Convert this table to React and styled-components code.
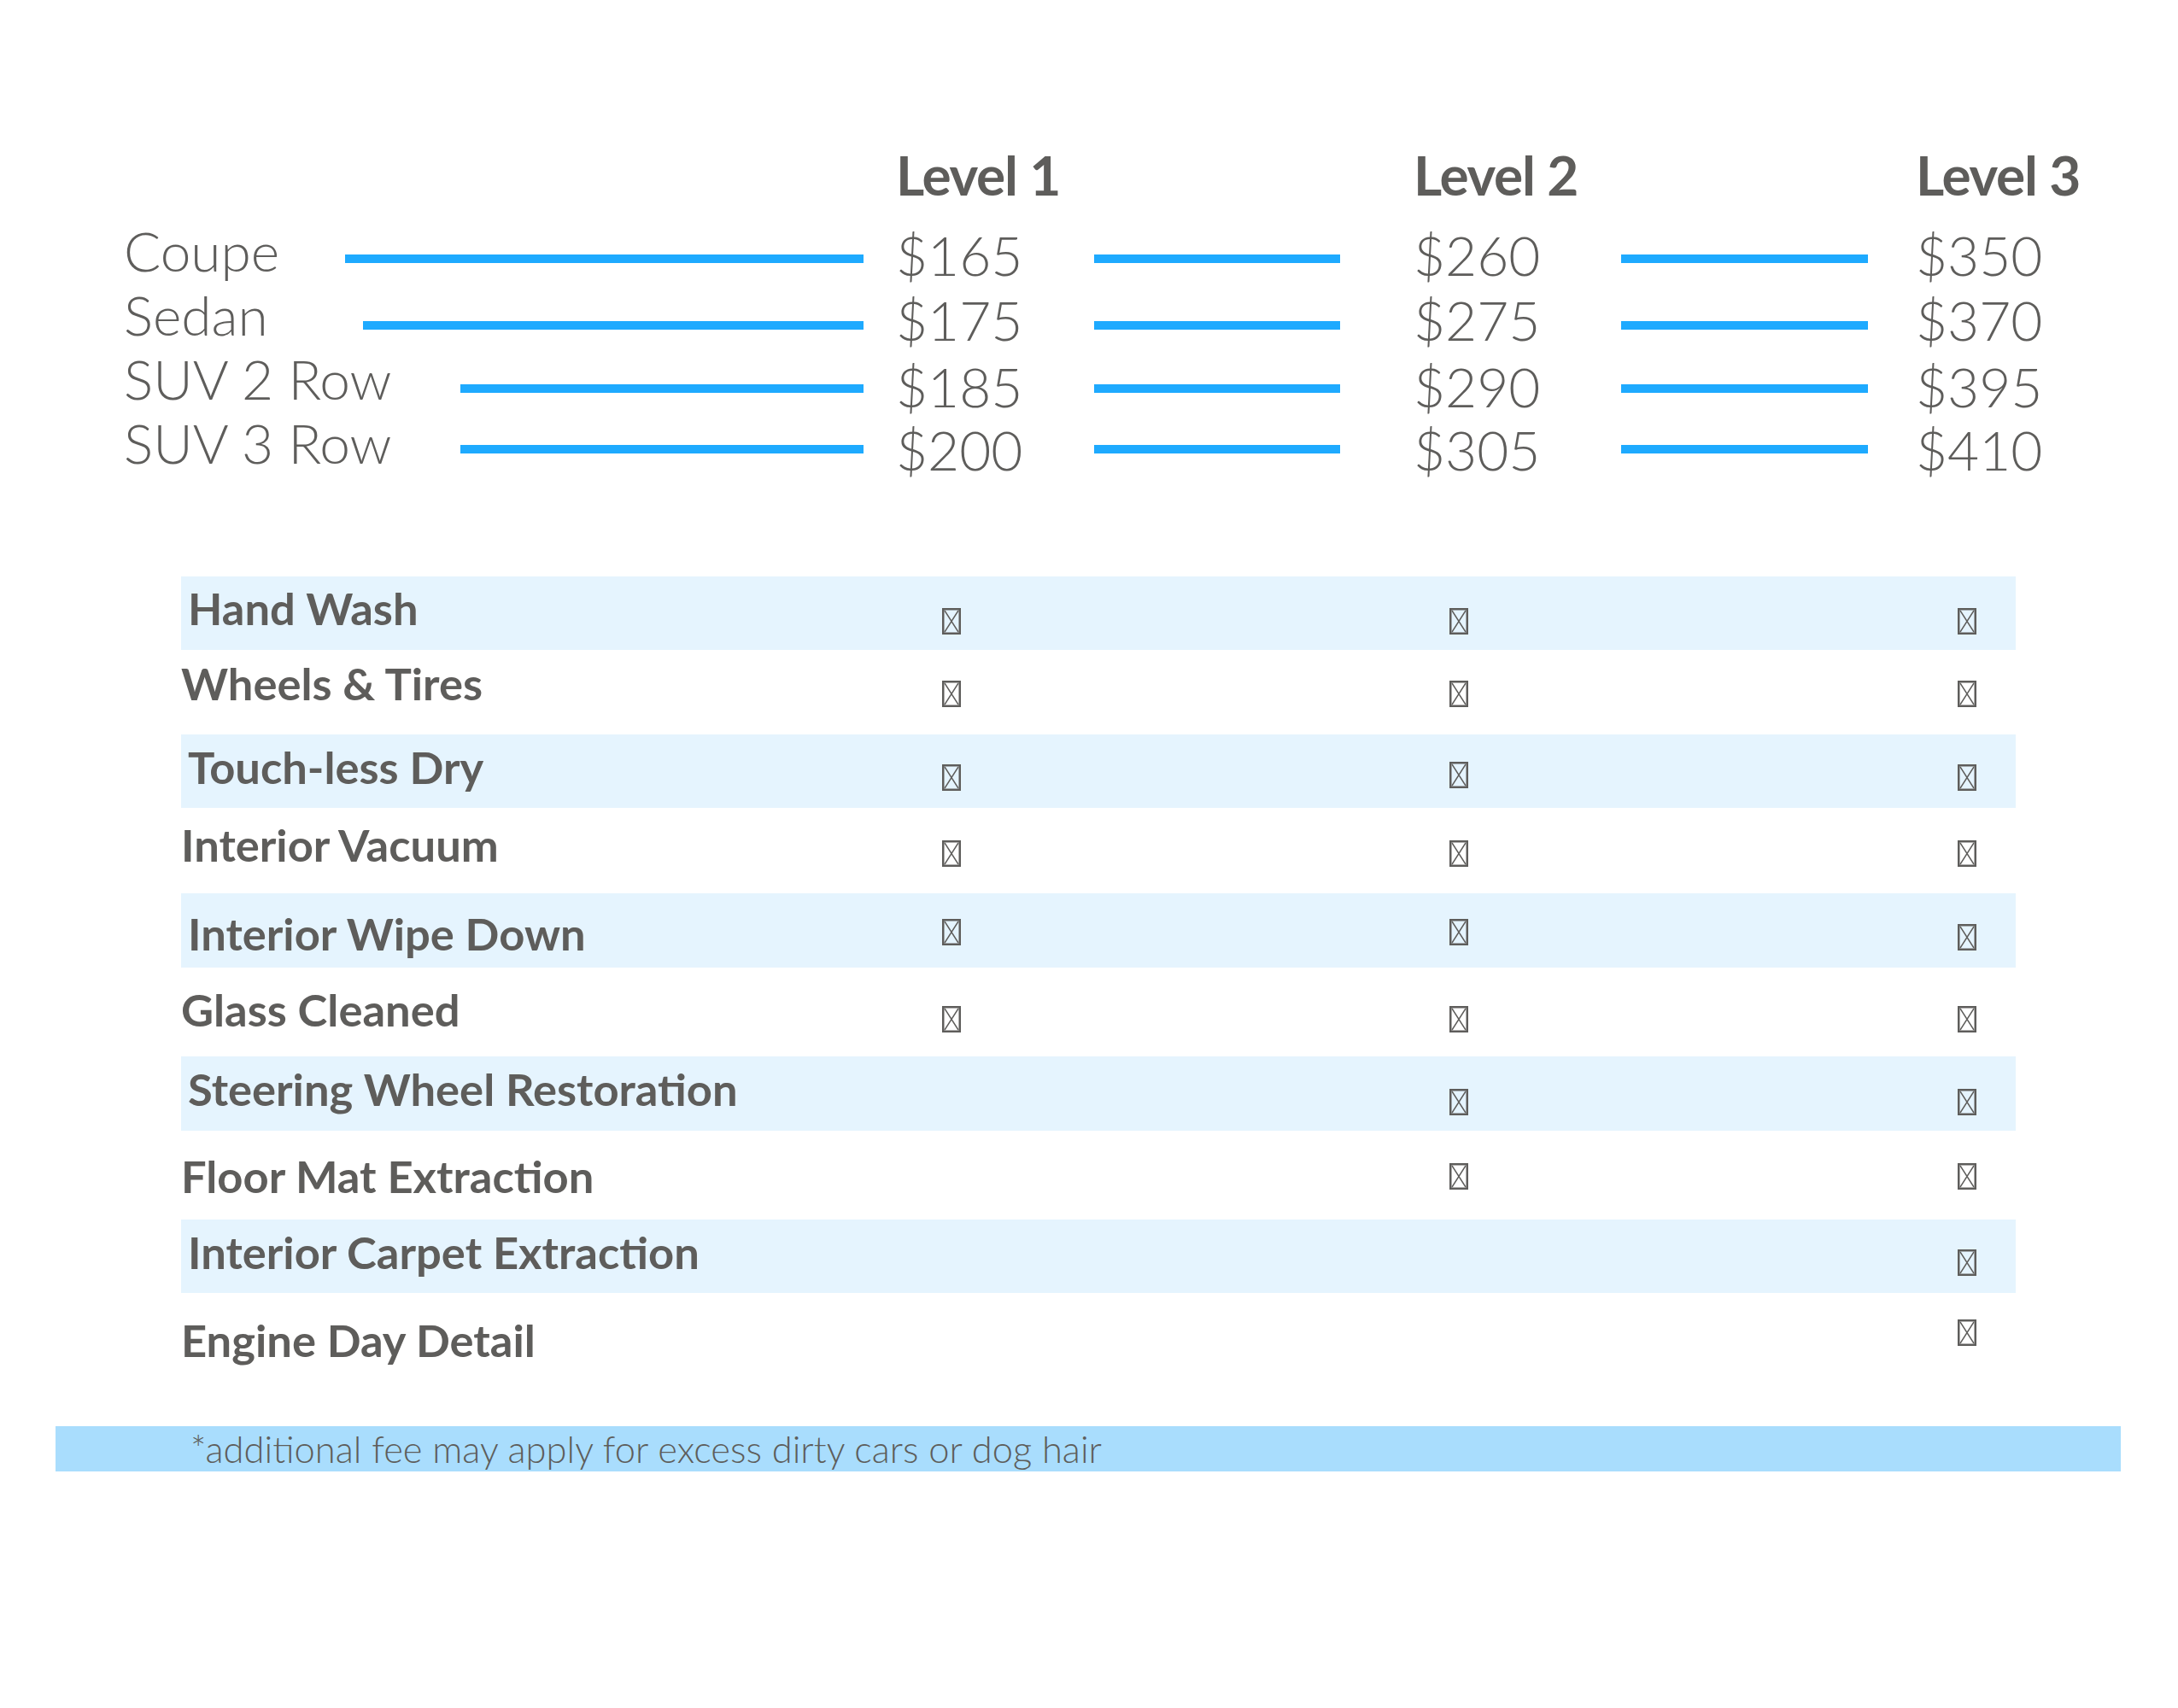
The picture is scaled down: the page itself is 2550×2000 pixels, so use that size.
import styled, { createGlobalStyle } from 'styled-components';

const GlobalStyle = createGlobalStyle`
  body {
    margin: 0;
    background: #ffffff;
  }
`;

const ink = '#5e5d5b';
const blue = '#1eaaff';

const vehicles = [
  { name: 'Coupe', rule: 607, drop: 42, lift: 5, prices: ['$165', '$260', '$350'] },
  { name: 'Sedan', rule: 586, drop: 45, lift: 6, prices: ['$175', '$275', '$370'] },
  { name: 'SUV 2 Row', rule: 472, drop: 44, lift: 9, prices: ['$185', '$290', '$395'] },
  { name: 'SUV 3 Row', rule: 472, drop: 40, lift: 8, prices: ['$200', '$305', '$410'] },
];

// tops are offsets inside each row, checks hold one top per level (null = not included)
const features = [
  { name: 'Hand Wash', h: 86, top: 11, checks: [37, 37, 37] },
  { name: 'Wheels & Tires', h: 99, top: 13, checks: [36, 36, 36] },
  { name: 'Touch-less Dry', h: 86, top: 12, checks: [35, 32, 35] },
  { name: 'Interior Vacuum', h: 100, top: 17, checks: [38, 38, 38] },
  { name: 'Interior Wipe Down', h: 87, top: 21, checks: [30, 30, 36] },
  { name: 'Glass Cleaned', h: 104, top: 23, checks: [45, 45, 45] },
  { name: 'Steering Wheel Restoration', h: 87, top: 12, checks: [null, 38, 38] },
  { name: 'Floor Mat Extraction', h: 104, top: 27, checks: [null, 38, 38] },
  { name: 'Interior Carpet Extraction', h: 86, top: 12, checks: [null, null, 35] },
  { name: 'Engine Day Detail', h: 110, top: 29, checks: [null, null, 31] },
];

const Page = styled.div`
  width: 2550px;
  padding-top: 167px;
  color: ${ink};
  font-family: Lato, 'Liberation Sans', sans-serif;
`;

const PriceGrid = styled.div`
  display: grid;
  grid-template-columns: 904px 606px 588px 1fr;
  padding-left: 145px;
`;

const Level = styled.div`
  font-weight: 700;
  font-size: 64px;
  line-height: 75px;
  letter-spacing: -1.2px;
  margin-bottom: 14px;
`;

const Cell = styled.div`
  display: flex;
  align-items: flex-start;
  height: 75px;
`;

const Name = styled.span`
  font-weight: 300;
  font-size: 64px;
  line-height: 75px;
  white-space: nowrap;
`;

const Amount = styled(Name)`
  margin-top: ${(p) => p.$lift}px;
`;

const Rule = styled.span`
  flex: none;
  width: ${(p) => p.$width}px;
  height: 10px;
  margin: ${(p) => p.$drop}px ${(p) => p.$inset}px 0 auto;
  background: ${blue};
`;

const Table = styled.div`
  width: 2148px;
  margin: 119px 0 0 212px;
`;

const Row = styled.div`
  display: grid;
  grid-template-columns: 891px 594px 595px 68px;
  align-items: start;
  height: ${(p) => p.$h}px;
  background: ${(p) => (p.$striped ? '#e5f4fe' : 'transparent')};
`;

const Feature = styled.div`
  padding: ${(p) => p.$top}px 0 0 ${(p) => (p.$striped ? 8 : 0)}px;
  font-weight: 700;
  font-size: 52.5px;
  line-height: 52px;
  white-space: nowrap;
`;

const CheckCell = styled.div`
  padding-top: ${(p) => p.$top}px;
  line-height: 0;
`;

const Note = styled.div`
  box-sizing: border-box;
  width: 2418px;
  height: 53px;
  margin: 46px 0 0 65px;
  padding-left: 158px;
  background: #a9ddfd;
  font-weight: 300;
  font-size: 43.5px;
  line-height: 53px;
`;

const MissingGlyph = () => (
  <svg width="22" height="31" viewBox="0 0 22 31">
    <rect x="1.25" y="1.25" width="19.5" height="28.5" fill="none" stroke={ink} strokeWidth="2.5" />
    <path d="M3 3 L19 28 M19 3 L3 28" stroke={ink} strokeWidth="1.4" fill="none" />
  </svg>
);

export default function App() {
  return (
    <Page>
      <GlobalStyle />
      <PriceGrid>
        <div />
        <Level>Level 1</Level>
        <Level>Level 2</Level>
        <Level>Level 3</Level>
        {vehicles.map((v) => [
          <Cell key={v.name + 'n'}>
            <Name>{v.name}</Name>
            <Rule $width={v.rule} $inset={38} $drop={v.drop} />
          </Cell>,
          <Cell key={v.name + '1'}>
            <Amount $lift={v.lift}>{v.prices[0]}</Amount>
            <Rule $width={288} $inset={86} $drop={v.drop} />
          </Cell>,
          <Cell key={v.name + '2'}>
            <Amount $lift={v.lift}>{v.prices[1]}</Amount>
            <Rule $width={289} $inset={56} $drop={v.drop} />
          </Cell>,
          <Cell key={v.name + '3'}>
            <Amount $lift={v.lift}>{v.prices[2]}</Amount>
          </Cell>,
        ])}
      </PriceGrid>

      <Table>
        {features.map((f, i) => (
          <Row key={f.name} $h={f.h} $striped={i % 2 === 0}>
            <Feature $top={f.top} $striped={i % 2 === 0}>
              {f.name}
            </Feature>
            {f.checks.map((top, j) => (
              <CheckCell key={j} $top={top || 0}>
                {top !== null && <MissingGlyph />}
              </CheckCell>
            ))}
          </Row>
        ))}
      </Table>

      <Note>*additional fee may apply for excess dirty cars or dog hair</Note>
    </Page>
  );
}
